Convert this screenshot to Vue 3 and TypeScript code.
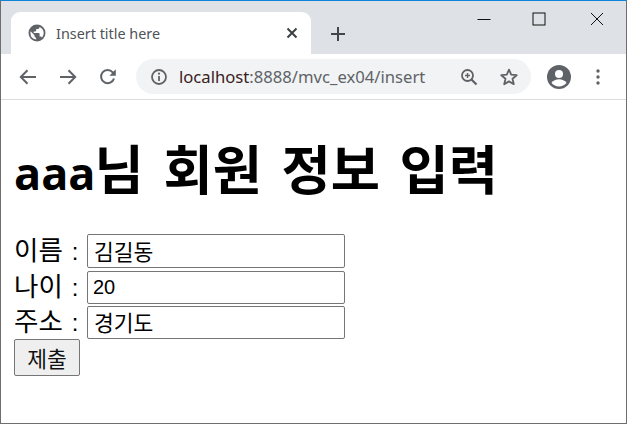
<script setup lang="ts">
const rows = [
  { label: '이름', value: '김길동', numeric: false },
  { label: '나이', value: '20', numeric: true },
  { label: '주소', value: '경기도', numeric: false },
]
</script>

<template>
  <div class="window">
    <header class="tabstrip">
      <div class="tab">
        <svg class="globe" width="18" height="18" viewBox="0 0 18 18">
          <path fill="#5f6368" d="M9 .5a8.5 8.5 0 1 0 0 17 8.5 8.5 0 0 0 0-17ZM2.4 9c0-.6.1-1.200.2-1.700L6.500 11.200v.9c0 .9.700 1.600 1.600 1.600v1.700A6.600 6.600 0 0 1 2.400 9Zm11.500 4.500c-.2-.700-.8-1.100-1.500-1.100h-.8V9.900c0-.4-.4-.8-.8-.8H5.700V7.400h1.700c.4 0 .8-.4.800-.8V4.900h1.600c.9 0 1.700-.7 1.700-1.600v-.4a6.600 6.600 0 0 1 2.400 10.600Z"/>
        </svg>
        <span class="tab-title">Insert title here</span>
        <svg class="tab-close" width="12" height="12" viewBox="0 0 12 12">
          <path d="M1.500 1.500l9 9M10.500 1.500l-9 9" stroke="#3c4043" stroke-width="2" fill="none"/>
        </svg>
      </div>
      <svg class="newtab" width="16" height="16" viewBox="0 0 16 16">
        <path d="M8 1v14M1 8h14" stroke="#43474b" stroke-width="2" fill="none"/>
      </svg>
      <div class="controls">
        <svg width="14" height="14" viewBox="0 0 14 14"><path d="M0.500 7.500h13" stroke="#111" fill="none"/></svg>
        <svg width="14" height="14" viewBox="0 0 14 14"><rect x="1" y="1" width="12" height="12" stroke="#111" fill="none"/></svg>
        <svg width="14" height="14" viewBox="0 0 14 14"><path d="M1 1l12 12M13 1L1 13" stroke="#111" fill="none"/></svg>
      </div>
    </header>

    <nav class="toolbar">
      <svg class="nav-icon" width="18" height="16" viewBox="0 0 18 16">
        <path d="M17 8H2M8.500 1.300L1.800 8l6.700 6.700" stroke="#5f6368" stroke-width="2" fill="none"/>
      </svg>
      <svg class="nav-icon" width="18" height="16" viewBox="0 0 18 16">
        <path d="M1 8h15M9.500 1.300L16.200 8l-6.700 6.700" stroke="#5f6368" stroke-width="2" fill="none"/>
      </svg>
      <svg class="nav-icon" width="18" height="18" viewBox="0 0 18 18">
        <path d="M15 10.500A6.600 6.600 0 1 1 13.700 4.300L15.500 6" stroke="#5f6368" stroke-width="2" fill="none"/>
        <path d="M16.800 1.300v6.400h-6.400z" fill="#5f6368"/>
      </svg>
      <div class="omnibox">
        <svg width="18" height="18" viewBox="0 0 18 18">
          <circle cx="9" cy="9" r="7" stroke="#5f6368" stroke-width="1.800" fill="none"/>
          <path d="M9 8v5" stroke="#5f6368" stroke-width="1.800"/>
          <circle cx="9" cy="5.700" r="1.100" fill="#5f6368"/>
        </svg>
        <span class="url"><span class="host">localhost</span>:8888/mvc_ex04/insert</span>
        <svg class="zoom" width="18" height="18" viewBox="0 0 18 18">
          <circle cx="7.500" cy="7.500" r="5.500" stroke="#5f6368" stroke-width="1.800" fill="none"/>
          <path d="M11.500 11.500L16.500 16.500" stroke="#5f6368" stroke-width="2.200"/>
          <path d="M7.500 5v5M5 7.500h5" stroke="#5f6368" stroke-width="1.400"/>
        </svg>
        <svg class="star" width="20" height="20" viewBox="0 0 20 20">
          <path d="M10 2.600l2.200 5.100 5.500.5-4.200 3.600 1.300 5.400L10 14.400l-4.800 2.800 1.300-5.400-4.200-3.600 5.500-.5z" stroke="#5f6368" stroke-width="1.800" fill="none" stroke-linejoin="round"/>
        </svg>
      </div>
      <svg class="avatar" width="24" height="24" viewBox="0 0 24 24">
        <circle cx="12" cy="12" r="12" fill="#5f6368"/>
        <circle cx="12" cy="9" r="4" fill="#fff"/>
        <path d="M4.500 18c1.600-2.600 4.500-3.700 7.500-3.700s5.900 1.100 7.500 3.700a10 10 0 0 1-15 0Z" fill="#fff"/>
      </svg>
      <svg class="menu" width="4" height="16" viewBox="0 0 4 16">
        <circle cx="2" cy="2" r="1.700" fill="#5f6368"/>
        <circle cx="2" cy="8" r="1.700" fill="#5f6368"/>
        <circle cx="2" cy="14" r="1.700" fill="#5f6368"/>
      </svg>
    </nav>

    <main class="page">
      <h1><span class="latin">aaa</span>님 회원 정보 입력</h1>
      <form class="form" @submit.prevent>
        <div v-for="row in rows" :key="row.label" class="row">
          <span class="label"><span class="label-name">{{ row.label }}</span><span class="colon">:</span></span>
          <input class="field" :class="{ 'field-num': row.numeric }" type="text" :value="row.value" />
        </div>
        <button class="submit" type="submit">제출</button>
      </form>
    </main>
  </div>
</template>

<style>
html, body { margin: 0; background: #fff; overflow: hidden; }
</style>

<style scoped>
.window {
  width: 627px;
  height: 424px;
  box-sizing: border-box;
  display: flex;
  flex-direction: column;
  border-left: 1px solid #6e6e6e;
  border-right: 1px solid #6e6e6e;
  border-bottom: 1px solid #6e6e6e;
  border-top: 1px solid #0f83d8;
  overflow: hidden;
}
.tabstrip {
  height: 53px;
  flex: none;
  display: flex;
  align-items: flex-end;
  background: #dee1e6;
  padding-left: 10px;
}
.tab {
  width: 300px;
  height: 42px;
  box-sizing: border-box;
  padding: 0 13px 0 17px;
  display: flex;
  align-items: center;
  background: #fff;
  border-radius: 9px 9px 0 0;
}
.tab-title {
  margin-left: 10px;
  flex: 1;
  font: 14.4px "Noto Sans", "Open Sans", sans-serif;
  color: #4f5357;
}
.newtab { margin: 0 0 12px 19px; }
.controls {
  margin-left: auto;
  align-self: flex-start;
  display: flex;
  gap: 44px;
  padding: 11px 22px 0 0;
}
.controls svg:first-child { margin-right: -3px; }
.toolbar {
  height: 46px;
  flex: none;
  box-sizing: border-box;
  display: flex;
  align-items: center;
  padding-left: 18px;
  background: #fff;
  border-bottom: 1px solid #dadce0;
}
.nav-icon { margin-right: 22px; }
.nav-icon:nth-child(3) { margin-right: 19px; }
.omnibox {
  width: 395px;
  height: 35px;
  box-sizing: border-box;
  padding: 0 12px 0 14px;
  display: flex;
  align-items: center;
  border-radius: 18px;
  background: #f1f3f4;
}
.url {
  margin-left: 11px;
  flex: 1;
  font: 16.65px "Noto Sans", "Open Sans", sans-serif;
  color: #5f6368;
  white-space: nowrap;
}
.host { color: #3a2020; }
.star { margin-left: 21px; }
.avatar { margin-left: 16px; }
.menu { margin-left: 25px; }
.page { flex: 1; padding: 0 13px; background: #fff; }
h1 {
  margin: 28px 0 0;
  height: 106px;
  font: bold 53.5px/78px "Noto Sans CJK KR", sans-serif;
  word-spacing: 7.5px;
  color: #000;
  white-space: pre;
}
.latin { font: bold 45px/78px "Open Sans", sans-serif; margin-right: -1px; }
.form { display: flex; flex-direction: column; align-items: flex-start; font: 24px "Liberation Sans", "Noto Sans CJK KR", sans-serif; }
.row { display: flex; align-items: center; }
.row:nth-child(2) { margin-top: 3px; }
.row:nth-child(3) { margin-top: 2px; }
.label { width: 73px; flex: none; display: flex; align-items: center; color: #000; line-height: 33px; }
.label-name { font-size: 26.5px; font-weight: 400; }
.colon { margin-left: 9px; }
.field {
  width: 258px;
  height: 33px;
  box-sizing: border-box;
  padding: 0 6px 2px;
  border: 1px solid #767676;
  border-radius: 2px;
  background: #fff;
  color: #000;
  font: 21.5px "Liberation Sans", "Noto Sans CJK KR", sans-serif;
  outline: none;
}
.row:first-child .field { height: 34px; }
.field-num { font-size: 20px; padding: 1px 5px; }
.submit {
  width: 66px;
  height: 37px;
  padding: 0;
  border: 1px solid #767676;
  border-radius: 2px;
  background: #efefef;
  color: #111;
  font: 21.5px "Liberation Sans", "Noto Sans CJK KR", sans-serif;
}
</style>
